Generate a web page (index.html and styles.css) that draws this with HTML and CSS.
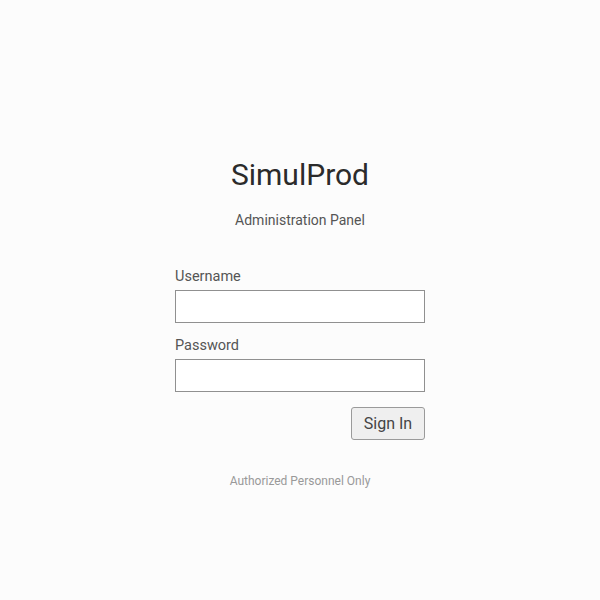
FILE: index.html
```html
<!DOCTYPE html>
<html lang="en">
<head>
<meta charset="utf-8">
<title>SimulProd</title>
<link rel="stylesheet" href="styles.css">
</head>
<body>
<main class="page">
  <h1 class="title">SimulProd</h1>
  <p class="subtitle">Administration Panel</p>
  <form class="form">
    <label class="label" for="username">Username</label>
    <input class="input" id="username" type="text">
    <label class="label label-second" for="password">Password</label>
    <input class="input" id="password" type="password">
    <div class="actions">
      <button class="button" type="button">Sign In</button>
    </div>
  </form>
  <p class="footer">Authorized Personnel Only</p>
</main>
</body>
</html>
```
FILE: styles.css
```css
html, body {
  margin: 0;
  padding: 0;
  background: #fcfcfc;
}
body {
  font-family: Roboto, "Liberation Sans", sans-serif;
  color: #333;
}
.page {
  width: 250px;
  margin: 0 auto;
  padding-top: 156px;
  display: flex;
  flex-direction: column;
}
.title {
  margin: 0;
  font-size: 30px;
  line-height: 38px;
  font-weight: 400;
  text-align: center;
  color: #2b2b2b;
}
.subtitle {
  margin: 16px 0 0;
  font-size: 14px;
  line-height: 20px;
  text-align: center;
  color: #555;
}
.form {
  margin-top: 35px;
  display: flex;
  flex-direction: column;
}
.label {
  font-size: 14.5px;
  line-height: 20px;
  color: #555;
  padding-top: 2px;
  margin-bottom: 3px;
}
.label-second {
  margin-top: 11px;
}
.input {
  box-sizing: border-box;
  width: 250px;
  height: 33px;
  margin: 0;
  border: 1px solid #909090;
  border-radius: 0;
  background: #fff;
  padding: 0 6px;
  font: inherit;
}
.actions {
  display: flex;
  justify-content: flex-end;
  margin-top: 15px;
}
.button {
  box-sizing: border-box;
  width: 74px;
  height: 33px;
  border: 1px solid #9a9a9a;
  border-radius: 3px;
  background: #efefef;
  font-family: inherit;
  font-size: 16px;
  color: #444;
  padding: 0;
}
.footer {
  margin: 33px 0 0;
  font-size: 12px;
  line-height: 16px;
  text-align: center;
  color: #999;
}
```
